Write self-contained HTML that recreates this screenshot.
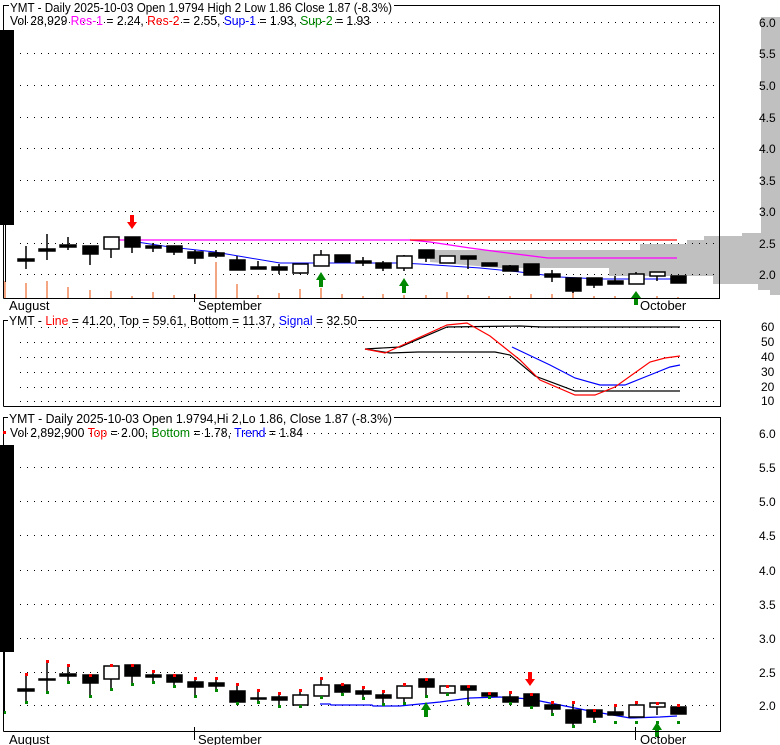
<!DOCTYPE html>
<html><head><meta charset="utf-8"><style>
html,body{margin:0;padding:0;background:#fff;width:780px;height:745px;overflow:hidden}
svg{display:block;font-family:"Liberation Sans",Arial,sans-serif}
</style></head><body>
<svg width="780" height="745" viewBox="0 0 780 745" xmlns="http://www.w3.org/2000/svg">
<!-- ===== TOP PANEL ===== -->
<g fill="#c0c0c0">
<rect x="761" y="17" width="19" height="217"/>
<polygon points="742,233 780,233 780,295 770,295 770,290 758,290 758,284 713,284 713,276 609,276 609,268 500,268 430,262 430,250 640,250 640,244 687,244 687,240 704,240 704,236 742,236"/>
</g>
<g stroke="#000" stroke-dasharray="1 6" stroke-width="1">
<line x1="20" y1="22.5" x2="716" y2="22.5"/><line x1="20" y1="53.5" x2="716" y2="53.5"/>
<line x1="20" y1="85.5" x2="716" y2="85.5"/><line x1="20" y1="117.5" x2="716" y2="117.5"/>
<line x1="20" y1="148.5" x2="716" y2="148.5"/><line x1="20" y1="180.5" x2="716" y2="180.5"/>
<line x1="20" y1="211.5" x2="716" y2="211.5"/><line x1="20" y1="243.5" x2="716" y2="243.5"/>
<line x1="20" y1="274.5" x2="716" y2="274.5"/>
</g>
<!-- volume -->
<g stroke="#f4a582" stroke-width="2">
<line x1="5" y1="281" x2="5" y2="298"/><line x1="26" y1="283" x2="26" y2="298"/><line x1="47" y1="281" x2="47" y2="298"/>
<line x1="68" y1="287" x2="68" y2="298"/><line x1="90" y1="290" x2="90" y2="298"/><line x1="111" y1="291" x2="111" y2="298"/>
<line x1="132" y1="296" x2="132" y2="298"/><line x1="153" y1="292" x2="153" y2="298"/><line x1="174" y1="295" x2="174" y2="298"/>
<line x1="195" y1="294" x2="195" y2="298"/><line x1="216" y1="262" x2="216" y2="298"/><line x1="237" y1="284" x2="237" y2="298"/>
<line x1="258" y1="295" x2="258" y2="298"/><line x1="279" y1="293" x2="279" y2="298"/><line x1="300" y1="289" x2="300" y2="298"/>
<line x1="321" y1="288" x2="321" y2="298"/><line x1="342" y1="294" x2="342" y2="298"/><line x1="363" y1="296" x2="363" y2="298"/>
<line x1="383" y1="294" x2="383" y2="298"/><line x1="404" y1="295" x2="404" y2="298"/><line x1="426" y1="295" x2="426" y2="298"/>
<line x1="447" y1="292" x2="447" y2="298"/><line x1="468" y1="295" x2="468" y2="298"/><line x1="489" y1="296" x2="489" y2="298"/>
<line x1="510" y1="296" x2="510" y2="298"/><line x1="531" y1="294" x2="531" y2="298"/><line x1="552" y1="294" x2="552" y2="298"/>
<line x1="573" y1="292" x2="573" y2="298"/><line x1="594" y1="296" x2="594" y2="298"/><line x1="615" y1="296" x2="615" y2="298"/>
<line x1="657" y1="296" x2="657" y2="298"/><line x1="678" y1="297" x2="678" y2="298"/>
</g>
<!-- lines -->
<polyline fill="none" stroke="#ff00ff" stroke-width="1.3" points="118,240 410,240 430,242 470,248 500,252 548,258 677,258"/>
<line x1="410" y1="240" x2="677" y2="240" stroke="#ff0000" stroke-width="1.3"/>
<polyline fill="none" stroke="#0000ff" stroke-width="1" points="137,242 170,247 215,252 250,258 280,263 400,263 420,264 480,268 520,272 560,277 600,279 677,279"/>
<rect x="0" y="30" width="14" height="195" fill="#000"/>
<line x1="5.5" y1="224" x2="5.5" y2="282" stroke="#000"/>
<g id="tc" stroke="#000" stroke-width="1.5">
<line x1="26" y1="246" x2="26" y2="269"/><rect x="18" y="259" width="16" height="2"/>
<line x1="47" y1="234" x2="47" y2="260"/><rect x="39" y="249" width="16" height="2"/>
<line x1="68" y1="237" x2="68" y2="250"/><rect x="60" y="245" width="16" height="2"/>
<line x1="90" y1="246" x2="90" y2="265"/><rect x="83" y="246" width="15" height="8"/>
<line x1="111" y1="237" x2="111" y2="258"/><rect x="104" y="237" width="15" height="12" fill="#fff"/>
<line x1="132" y1="237" x2="132" y2="253"/><rect x="125" y="237" width="15" height="10"/>
<line x1="153" y1="243" x2="153" y2="252"/><rect x="146" y="246" width="15" height="2"/>
<line x1="174" y1="246" x2="174" y2="255"/><rect x="167" y="246" width="15" height="6"/>
<line x1="195" y1="250" x2="195" y2="264"/><rect x="188" y="252" width="15" height="6"/>
<line x1="216" y1="250" x2="216" y2="258"/><rect x="209" y="253" width="15" height="3"/>
<line x1="237" y1="256" x2="237" y2="270"/><rect x="230" y="260" width="15" height="10"/>
<line x1="258" y1="261" x2="258" y2="269"/><rect x="251" y="267" width="15" height="2"/>
<line x1="279" y1="264" x2="279" y2="274"/><rect x="272" y="267" width="15" height="3"/>
<line x1="300" y1="264" x2="300" y2="274"/><rect x="293" y="264" width="15" height="9" fill="#fff"/>
<line x1="321" y1="250" x2="321" y2="266"/><rect x="314" y="255" width="15" height="11" fill="#fff"/>
<line x1="342" y1="255" x2="342" y2="262"/><rect x="335" y="255" width="15" height="7"/>
<line x1="363" y1="257" x2="363" y2="266"/><rect x="356" y="261" width="15" height="2"/>
<line x1="383" y1="261" x2="383" y2="271"/><rect x="376" y="263" width="15" height="5"/>
<line x1="404" y1="255" x2="404" y2="271"/><rect x="397" y="256" width="15" height="12" fill="#fff"/>
<line x1="426" y1="250" x2="426" y2="262"/><rect x="419" y="250" width="15" height="8"/>
<line x1="447" y1="256" x2="447" y2="263"/><rect x="440" y="256" width="15" height="7" fill="#fff"/>
<line x1="468" y1="256" x2="468" y2="269"/><rect x="461" y="256" width="15" height="3"/>
<line x1="489" y1="263" x2="489" y2="266"/><rect x="482" y="263" width="15" height="3"/>
<line x1="510" y1="265" x2="510" y2="271"/><rect x="503" y="266" width="15" height="5"/>
<line x1="531" y1="264" x2="531" y2="275"/><rect x="524" y="264" width="15" height="11"/>
<line x1="552" y1="270" x2="552" y2="282"/><rect x="545" y="274" width="15" height="3"/>
<line x1="573" y1="278" x2="573" y2="293"/><rect x="566" y="278" width="15" height="13"/>
<line x1="594" y1="278" x2="594" y2="288"/><rect x="587" y="278" width="15" height="7"/>
<line x1="615" y1="276" x2="615" y2="284"/><rect x="608" y="281" width="15" height="3"/>
<line x1="636" y1="272" x2="636" y2="284"/><rect x="629" y="274" width="15" height="10" fill="#fff"/>
<line x1="657" y1="272" x2="657" y2="281"/><rect x="650" y="272" width="15" height="4" fill="#fff"/>
<line x1="678" y1="276" x2="678" y2="283"/><rect x="671" y="276" width="15" height="7"/>
</g>
<!-- arrows -->
<polygon points="130,215 134,215 134,222 137,222 132,229 127,222 130,222" fill="#ff0000"/>
<polygon points="319,287 323,287 323,280 326,280 321,272 316,280 319,280" fill="#008800"/>
<polygon points="402,293 406,293 406,286 409,286 404,278 399,286 402,286" fill="#008800"/>
<polygon points="634,305 638,305 638,298 641,298 636,291 631,298 634,298" fill="#008800"/>
<!-- frame -->
<path d="M3.5,298.5 V5.5 H719.5 V298.5 H3.5" fill="none" stroke="#000"/>
<line x1="194.5" y1="294" x2="194.5" y2="302" stroke="#000"/>
<rect x="9" y="0" width="385" height="12" fill="#fff"/>
<text x="10" y="12" font-size="13" textLength="382" lengthAdjust="spacingAndGlyphs">YMT - Daily 2025-10-03 Open 1.9794  High 2  Low 1.86  Close 1.87 (-8.3%)</text>
<text x="10" y="25" font-size="13" textLength="360" lengthAdjust="spacingAndGlyphs">Vol 28,929 <tspan fill="#ff00ff">Res-1</tspan> = 2.24, <tspan fill="#ff0000">Res-2</tspan> = 2.55, <tspan fill="#0000ff">Sup-1</tspan> = 1.93, <tspan fill="#008800">Sup-2</tspan> = 1.93</text>
<g font-size="12" fill="#000">
<text x="759" y="27">6.0</text><text x="759" y="58">5.5</text><text x="759" y="90">5.0</text>
<text x="759" y="122">4.5</text><text x="759" y="153">4.0</text><text x="759" y="185">3.5</text>
<text x="759" y="216">3.0</text><text x="759" y="248">2.5</text><text x="759" y="279">2.0</text>
</g>
<g font-size="13"><text x="9" y="310">August</text><text x="198" y="310">September</text><text x="640" y="310">October</text></g>

<!-- ===== MIDDLE PANEL ===== -->
<g stroke="#000" stroke-dasharray="1 6">
<line x1="20" y1="327.5" x2="716" y2="327.5"/><line x1="20" y1="342.5" x2="716" y2="342.5"/>
<line x1="20" y1="357.5" x2="716" y2="357.5"/><line x1="20" y1="372.5" x2="716" y2="372.5"/>
<line x1="20" y1="387.5" x2="716" y2="387.5"/><line x1="20" y1="401.5" x2="716" y2="401.5"/>
</g>
<g fill="none" stroke-width="1.2">
<polyline stroke="#000" points="365,349 400,347 447,327 520,326 542,327 680,327"/>
<polyline stroke="#000" points="365,349 390,353 418,352 495,352 510,355 535,376 575,391 680,391"/>
<polyline stroke="#0000ff" points="512,347 550,365 575,378 600,385 625,385 650,375 670,367 680,365"/>
<polyline stroke="#ff0000" points="365,349 385,353 447,325 467,323 490,336 520,360 540,380 575,395 595,395 615,387 650,362 665,358 680,356"/>
</g>
<path d="M3.5,406.5 V320.5 H720.5 V406.5 H3.5" fill="none" stroke="#000"/>
<rect x="8" y="313" width="350" height="13" fill="#fff"/>
<text x="9" y="325" font-size="13" textLength="348" lengthAdjust="spacingAndGlyphs">YMT - <tspan fill="#ff0000">Line</tspan> = 41.20, Top = 59.61, Bottom = 11.37, <tspan fill="#0000ff">Signal</tspan> = 32.50</text>
<g font-size="12"><text x="761" y="331">60</text><text x="761" y="346">50</text><text x="761" y="361">40</text>
<text x="761" y="376">30</text><text x="761" y="391">20</text><text x="761" y="405">10</text></g>

<!-- ===== BOTTOM PANEL ===== -->
<g stroke="#000" stroke-dasharray="1 6">
<line x1="20" y1="433.5" x2="716" y2="433.5"/><line x1="20" y1="467.5" x2="716" y2="467.5"/>
<line x1="20" y1="501.5" x2="716" y2="501.5"/><line x1="20" y1="535.5" x2="716" y2="535.5"/>
<line x1="20" y1="570.5" x2="716" y2="570.5"/><line x1="20" y1="604.5" x2="716" y2="604.5"/>
<line x1="20" y1="638.5" x2="716" y2="638.5"/><line x1="20" y1="672.5" x2="716" y2="672.5"/>
<line x1="20" y1="705.5" x2="716" y2="705.5"/>
</g>
<polyline fill="none" stroke="#0000ff" stroke-width="1.3" points="320,704 330,704 331,705 372,705 373,706 400,706 410,705 440,702 470,698 500,697 530,699 560,705 590,711 630,718 660,717 677,716"/>
<rect x="0" y="445" width="14" height="207" fill="#000"/>
<line x1="4.5" y1="652" x2="4.5" y2="712" stroke="#000"/>
<g stroke="#000" stroke-width="1.5">
<line x1="26" y1="674" x2="26" y2="701"/><rect x="18" y="689" width="16" height="2"/>
<line x1="47" y1="661" x2="47" y2="691"/><rect x="39" y="679" width="16" height="1"/>
<line x1="68" y1="665" x2="68" y2="681"/><rect x="60" y="674" width="16" height="2"/>
<line x1="90" y1="675" x2="90" y2="695"/><rect x="83" y="675" width="15" height="8"/>
<line x1="111" y1="665" x2="111" y2="688"/><rect x="104" y="666" width="15" height="13" fill="#fff"/>
<line x1="132" y1="665" x2="132" y2="683"/><rect x="125" y="665" width="15" height="11"/>
<line x1="153" y1="671" x2="153" y2="681"/><rect x="146" y="675" width="15" height="2"/>
<line x1="174" y1="675" x2="174" y2="685"/><rect x="167" y="675" width="15" height="7"/>
<line x1="195" y1="678" x2="195" y2="695"/><rect x="188" y="682" width="15" height="5"/>
<line x1="216" y1="678" x2="216" y2="689"/><rect x="209" y="683" width="15" height="3"/>
<line x1="237" y1="684" x2="237" y2="702"/><rect x="230" y="691" width="15" height="11"/>
<line x1="258" y1="690" x2="258" y2="701"/><rect x="251" y="698" width="15" height="1"/>
<line x1="279" y1="693" x2="279" y2="705"/><rect x="272" y="697" width="15" height="3"/>
<line x1="300" y1="690" x2="300" y2="705"/><rect x="293" y="695" width="15" height="10" fill="#fff"/>
<line x1="321" y1="678" x2="321" y2="696"/><rect x="314" y="685" width="15" height="11" fill="#fff"/>
<line x1="342" y1="684" x2="342" y2="693"/><rect x="335" y="685" width="15" height="7"/>
<line x1="363" y1="687" x2="363" y2="697"/><rect x="356" y="691" width="15" height="3"/>
<line x1="383" y1="691" x2="383" y2="703"/><rect x="376" y="695" width="15" height="3"/>
<line x1="404" y1="684" x2="404" y2="702"/><rect x="397" y="686" width="15" height="12" fill="#fff"/>
<line x1="426" y1="679" x2="426" y2="695"/><rect x="419" y="679" width="15" height="8"/>
<line x1="447" y1="686" x2="447" y2="693"/><rect x="440" y="686" width="15" height="7" fill="#fff"/>
<line x1="468" y1="686" x2="468" y2="702"/><rect x="461" y="686" width="15" height="4"/>
<line x1="489" y1="693" x2="489" y2="696"/><rect x="482" y="693" width="15" height="3"/>
<line x1="510" y1="692" x2="510" y2="702"/><rect x="503" y="697" width="15" height="5"/>
<line x1="531" y1="694" x2="531" y2="706"/><rect x="524" y="694" width="15" height="12"/>
<line x1="552" y1="702" x2="552" y2="713"/><rect x="545" y="705" width="15" height="4"/>
<line x1="573" y1="702" x2="573" y2="725"/><rect x="566" y="710" width="15" height="13"/>
<line x1="594" y1="710" x2="594" y2="721"/><rect x="587" y="710" width="15" height="7"/>
<line x1="615" y1="705" x2="615" y2="715"/><rect x="608" y="712" width="15" height="3"/>
<line x1="636" y1="702" x2="636" y2="717"/><rect x="629" y="705" width="15" height="12" fill="#fff"/>
<line x1="657" y1="703" x2="657" y2="715"/><rect x="650" y="703" width="15" height="4" fill="#fff"/>
<line x1="678" y1="705" x2="678" y2="714"/><rect x="671" y="707" width="15" height="7"/>
</g>
<g fill="#ff0000">
<rect x="25" y="673" width="3" height="3"/><rect x="46" y="660" width="3" height="3"/><rect x="67" y="664" width="3" height="3"/>
<rect x="89" y="674" width="3" height="3"/><rect x="110" y="664" width="3" height="3"/><rect x="131" y="664" width="3" height="3"/>
<rect x="152" y="670" width="3" height="3"/><rect x="173" y="674" width="3" height="3"/><rect x="194" y="677" width="3" height="3"/>
<rect x="215" y="677" width="3" height="3"/><rect x="236" y="683" width="3" height="3"/><rect x="257" y="689" width="3" height="3"/>
<rect x="278" y="692" width="3" height="3"/><rect x="299" y="689" width="3" height="3"/><rect x="320" y="677" width="3" height="3"/>
<rect x="341" y="683" width="3" height="3"/><rect x="362" y="686" width="3" height="3"/><rect x="382" y="690" width="3" height="3"/>
<rect x="403" y="683" width="3" height="3"/><rect x="425" y="678" width="3" height="3"/><rect x="446" y="685" width="3" height="3"/>
<rect x="467" y="685" width="3" height="3"/><rect x="488" y="692" width="3" height="3"/><rect x="509" y="691" width="3" height="3"/>
<rect x="530" y="693" width="3" height="3"/><rect x="551" y="701" width="3" height="3"/><rect x="572" y="701" width="3" height="3"/>
<rect x="593" y="709" width="3" height="3"/><rect x="614" y="704" width="3" height="3"/><rect x="635" y="701" width="3" height="3"/>
<rect x="656" y="702" width="3" height="3"/><rect x="677" y="704" width="3" height="3"/>
</g>
<g fill="#008800">
<rect x="3" y="711" width="3" height="3"/>
<rect x="25" y="701" width="3" height="3"/><rect x="46" y="691" width="3" height="3"/><rect x="67" y="681" width="3" height="3"/>
<rect x="89" y="695" width="3" height="3"/><rect x="110" y="688" width="3" height="3"/><rect x="131" y="683" width="3" height="3"/>
<rect x="152" y="681" width="3" height="3"/><rect x="173" y="685" width="3" height="3"/><rect x="194" y="695" width="3" height="3"/>
<rect x="215" y="689" width="3" height="3"/><rect x="236" y="702" width="3" height="3"/><rect x="257" y="701" width="3" height="3"/>
<rect x="278" y="705" width="3" height="3"/><rect x="299" y="705" width="3" height="3"/><rect x="320" y="696" width="3" height="3"/>
<rect x="341" y="693" width="3" height="3"/><rect x="362" y="697" width="3" height="3"/><rect x="382" y="703" width="3" height="3"/>
<rect x="403" y="702" width="3" height="3"/><rect x="425" y="695" width="3" height="3"/><rect x="446" y="693" width="3" height="3"/>
<rect x="467" y="702" width="3" height="3"/><rect x="488" y="696" width="3" height="3"/><rect x="509" y="702" width="3" height="3"/>
<rect x="530" y="706" width="3" height="3"/><rect x="551" y="713" width="3" height="3"/><rect x="572" y="725" width="3" height="3"/>
<rect x="593" y="720" width="3" height="3"/><rect x="614" y="721" width="3" height="3"/><rect x="635" y="721" width="3" height="3"/>
<rect x="656" y="721" width="3" height="3"/><rect x="677" y="721" width="3" height="3"/>
</g>
<polygon points="528,672 532,672 532,679 535,679 530,686 525,679 528,679" fill="#ff0000"/>
<polygon points="424,717 428,717 428,710 431,710 426,702 421,710 424,710" fill="#008800"/>
<polygon points="655,737 659,737 659,730 662,730 657,722 652,730 655,730" fill="#008800"/>
<path d="M3.5,731.5 V417.5 H720.5 V731.5 H3.5" fill="none" stroke="#000"/>
<line x1="194.5" y1="727" x2="194.5" y2="740" stroke="#000"/>
<line x1="635.5" y1="727" x2="635.5" y2="740" stroke="#000"/>
<rect x="8" y="410" width="386" height="14" fill="#fff"/>
<text x="9" y="423" font-size="13" textLength="383" lengthAdjust="spacingAndGlyphs">YMT - Daily 2025-10-03 Open 1.9794,Hi 2,Lo 1.86, Close 1.87 (-8.3%)</text>
<text x="10" y="437" font-size="13" textLength="293" lengthAdjust="spacingAndGlyphs">Vol 2,892,900 <tspan fill="#ff0000">Top</tspan> = 2.00, <tspan fill="#008800">Bottom</tspan> = 1.78, <tspan fill="#0000ff">Trend</tspan> = 1.84</text>
<rect x="3" y="431" width="3" height="3" fill="#ff0000"/>
<g font-size="12"><text x="759" y="438">6.0</text><text x="759" y="472">5.5</text><text x="759" y="506">5.0</text>
<text x="759" y="540">4.5</text><text x="759" y="575">4.0</text><text x="759" y="609">3.5</text>
<text x="759" y="643">3.0</text><text x="759" y="677">2.5</text><text x="759" y="710">2.0</text></g>
<g font-size="13"><text x="9" y="744">August</text><text x="198" y="744">September</text><text x="640" y="744">October</text></g>
</svg>
</body></html>
